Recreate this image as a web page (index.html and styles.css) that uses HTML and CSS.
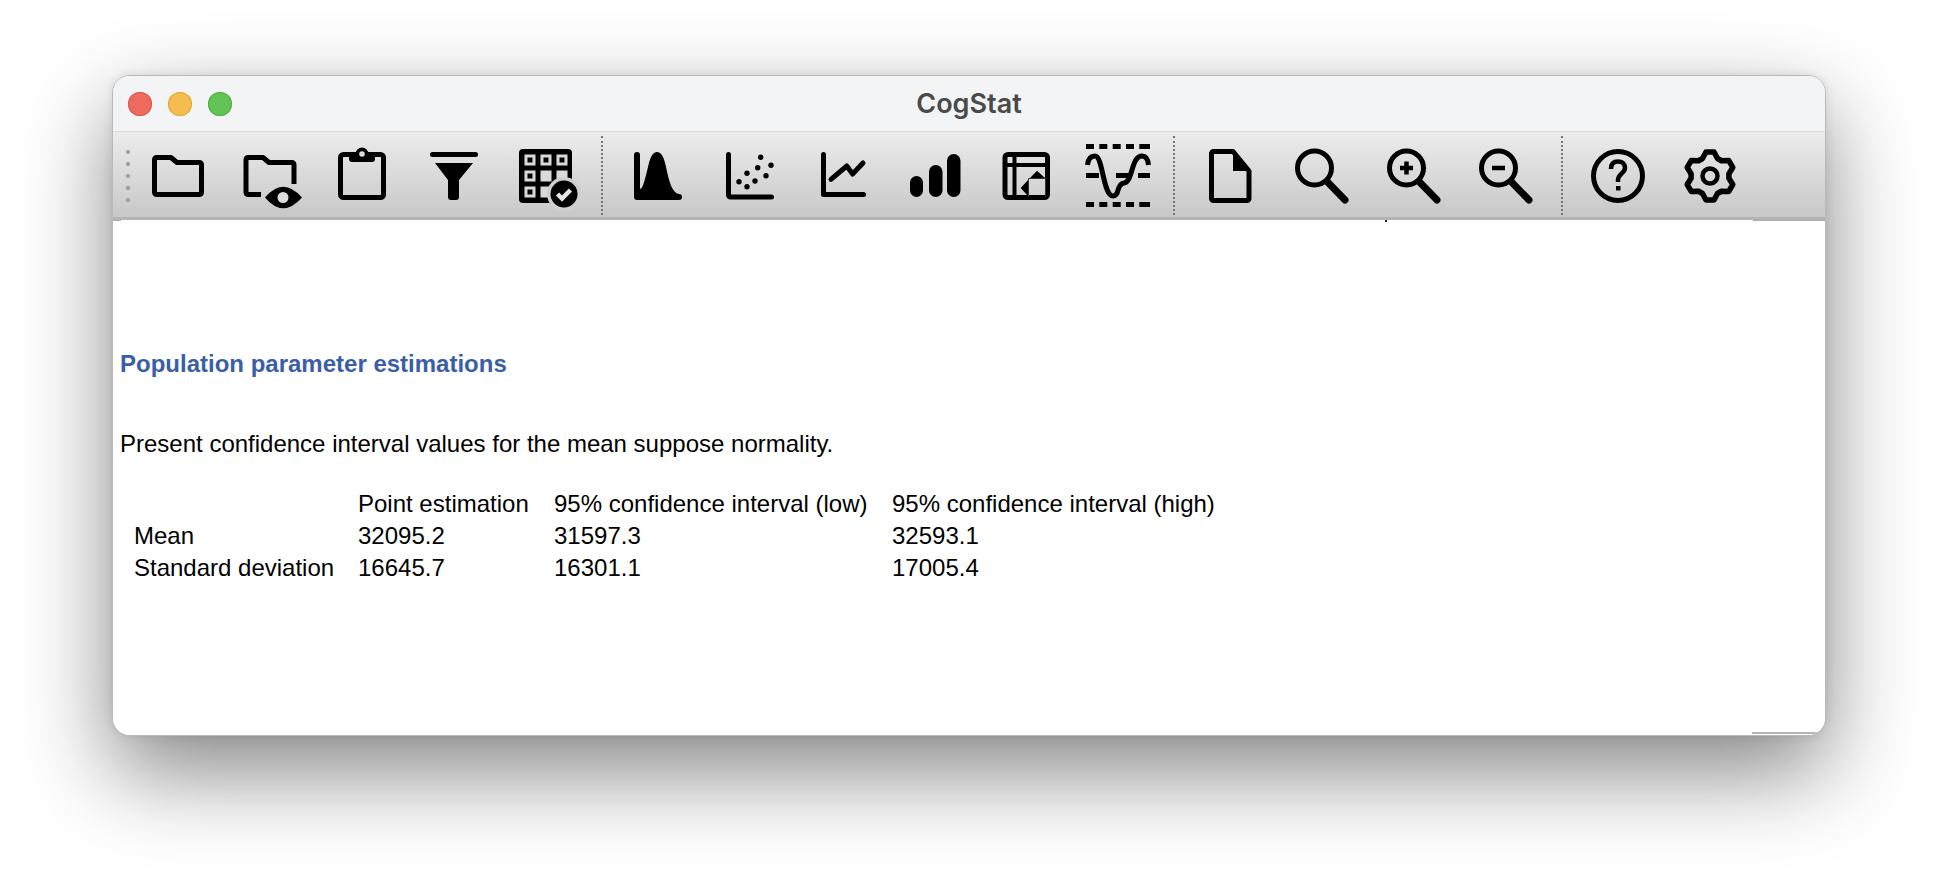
FILE: index.html
```html
<!DOCTYPE html>
<html lang="en">
<head>
<meta charset="utf-8">
<title>CogStat</title>
<link rel="stylesheet" href="styles.css">
</head>
<body>
<div class="window">
  <header class="titlebar">
    <span class="light red"></span><span class="light yellow"></span><span class="light green"></span>
    <span class="title">CogStat</span>
  </header>
  <nav class="toolbar">
    <div class="grip"><i></i><i></i><i></i><i></i><i></i></div>
    <div class="slot"><svg class="ico" viewBox="0 0 64 64"><path class="ln" d="M10 14.500h15l6 5h22.500a2 2 0 0 1 2 2v28a2 2 0 0 1-2 2h-43a2 2 0 0 1-2-2v-33a2 2 0 0 1 2-2z"/></svg></div>
    <div class="slot"><svg class="ico" viewBox="0 0 64 64"><path class="ln" d="M23 51.500H10a2 2 0 0 1-2-2v-33a2 2 0 0 1 2-2h15l6 5h23a2 2 0 0 1 2 2V41"/><path d="M27 54.500Q45 33 64 54.500Q45 76 27 54.500Z"/><circle class="hole" cx="45" cy="54.500" r="5.500"/></svg></div>
    <div class="slot"><svg class="ico" viewBox="0 0 64 64"><rect class="ln" x="10.500" y="11.500" width="43" height="43" rx="3"/><path d="M19 11h6.500a6.500 6.500 0 0 1 13 0H45v5a3 3 0 0 1-3 3H22a3 3 0 0 1-3-3z"/><circle class="hole" cx="32" cy="11" r="2.800"/></svg></div>
    <div class="slot"><svg class="ico" viewBox="0 0 64 64"><rect x="8" y="9" width="48" height="5" rx="2.500"/><path d="M13 20H51L37 37V54a3 3 0 0 1-3 3h-5a3 3 0 0 1-3-3V37Z"/></svg></div>
    <div class="slot"><svg class="ico" viewBox="0 0 64 64"><rect x="5" y="6" width="53" height="54" rx="4"/><g class="cell"><rect x="10.500" y="11.500" width="11" height="11"/><rect x="26.500" y="11.500" width="11" height="11"/><rect x="42.500" y="11.500" width="11" height="11"/><rect x="10.500" y="27.500" width="11" height="11"/><rect x="26.500" y="27.500" width="11" height="11"/><rect x="42.500" y="27.500" width="11" height="11"/><rect x="10.500" y="43.500" width="11" height="11"/><rect x="26.500" y="43.500" width="11" height="11"/></g><rect x="13.500" y="14.500" width="5" height="5"/><rect x="29.500" y="14.500" width="5" height="5"/><rect x="45.500" y="14.500" width="5" height="5"/><rect x="13.500" y="30.500" width="5" height="5"/><rect x="13.500" y="46.500" width="5" height="5"/><circle class="hole-low" cx="50" cy="51" r="17"/><circle cx="50" cy="51" r="13.500"/><path class="tick" d="M43.500 51l4.500 4.500 8.500-8.500"/></svg></div>
    <div class="sep"></div>
    <div class="slot"><svg class="ico" viewBox="1 0 64 64"><path d="M9 12a3 3 0 0 1 6 0V46C18 46 20 36 23 24C25 14 28 9 32 9C36 9 39 14 41 24C44 38 47 50 54 51a3 3 0 0 1 0 6H12a3 3 0 0 1-3-3Z"/></svg></div>
    <div class="slot"><svg class="ico" viewBox="0 0 64 64"><path class="ln rnd" d="M10.500 11.500V52a2 2 0 0 0 2 2H53.500"/><circle cx="42.700" cy="14.300" r="2.700"/><circle cx="39.700" cy="24.700" r="2.700"/><circle cx="53" cy="22.300" r="2.700"/><circle cx="48" cy="32.700" r="2.700"/><circle cx="29" cy="30.300" r="2.700"/><circle cx="21" cy="38.700" r="2.700"/><circle cx="37" cy="38" r="2.700"/><circle cx="29" cy="43.700" r="2.700"/></svg></div>
    <div class="slot"><svg class="ico" viewBox="-1 0 64 64"><path class="ln rnd" d="M12.500 11.500V51.500H52.500"/><path class="ln rnd" d="M20 36.300L35.800 23L41.600 31L52 20"/></svg></div>
    <div class="slot"><svg class="ico" viewBox="-1 0 64 64"><rect x="7" y="33" width="13" height="21" rx="6.500"/><rect x="26" y="22" width="13.500" height="32" rx="6.700"/><rect x="44" y="11" width="13.500" height="43" rx="6.700"/></svg></div>
    <div class="slot"><svg class="ico" viewBox="0 0 64 64"><rect class="ln" x="11" y="11.500" width="42.500" height="43" rx="3"/><path class="ln thin" d="M11 22H53.500M20.500 11.500V54.500"/><path d="M43 27.700L51 35H36ZM26.700 45L34 37V53Z"/><path class="ln hair" d="M34.500 35.500H51.500V54M34.500 35.500V54"/></svg></div>
    <div class="slot"><svg class="ico" viewBox="0 0 64 64"><g><rect x="0" y="1" width="8" height="5"/><rect x="13.300" y="1" width="8" height="5"/><rect x="26.700" y="1" width="8" height="5"/><rect x="40" y="1" width="8" height="5"/><rect x="53.300" y="1" width="10.700" height="5"/><rect x="0" y="59" width="8" height="5"/><rect x="13.300" y="59" width="8" height="5"/><rect x="26.700" y="59" width="8" height="5"/><rect x="40" y="59" width="8" height="5"/><rect x="53.300" y="59" width="10.700" height="5"/><rect x="0" y="30" width="13" height="5"/><rect x="30" y="30" width="14" height="5"/><rect x="52" y="30" width="12" height="5"/></g><path class="ln" d="M1.500 22C2 16 5 13 9 13C17 13 17 53 27 53C34 53 30 41 38 40C47 39 45 13 56 13C60 13 62 16 62.500 22"/></svg></div>
    <div class="sep"></div>
    <div class="slot"><svg class="ico" viewBox="0 0 64 64"><path class="ln" d="M15 8.500H35L51 28V55.500a2 2 0 0 1-2 2H15.500a2 2 0 0 1-2-2V10a2 2 0 0 1 1.500-1.500Z"/><path d="M35 8L52 28H35Z"/></svg></div>
    <div class="slot"><svg class="ico" viewBox="0 0 64 64"><circle class="ln" cx="24.500" cy="25" r="17"/><path class="ln hdl" d="M38 39.500L55 57"/></svg></div>
    <div class="slot"><svg class="ico" viewBox="0 0 64 64"><circle class="ln" cx="24.500" cy="25" r="17"/><path class="ln hdl" d="M38 39.500L55 57"/><path class="ln sym" d="M18 25H31M24.500 18.500V31.500"/></svg></div>
    <div class="slot"><svg class="ico" viewBox="0 0 64 64"><circle class="ln" cx="24.500" cy="25" r="17"/><path class="ln hdl" d="M38 39.500L55 57"/><path class="ln sym" d="M18 25H31"/></svg></div>
    <div class="sep"></div>
    <div class="slot"><svg class="ico" viewBox="0 0 64 64"><circle class="ln" cx="32" cy="33" r="24.500"/><path class="ln sym" d="M25 26C25 20.500 28 18.500 32 18.500C37 18.500 39 22 39 25C39 30 32 31 32 37V39"/><rect x="30" y="43" width="4.500" height="4.500"/></svg></div>
    <div class="slot"><svg class="ico" viewBox="0 0 64 64"><path class="ln gear" d="M24.500 15.500L28 9H36L39.500 15.500L43.410 17.750L50.780 17.540L54.780 24.460L50.910 30.750V35.250L54.780 41.540L50.780 48.460L43.410 48.250L39.500 50.500L36 57H28L24.500 50.500L20.590 48.250L13.220 48.460L9.220 41.540L13.090 35.250V30.750L9.220 24.460L13.220 17.540L20.590 17.750Z"/><circle class="ln gc" cx="32" cy="33" r="7.500"/></svg></div>
  </nav>
  <main class="content">
    <h2 class="heading">Population parameter estimations</h2>
    <p class="note">Present confidence interval values for the mean suppose normality.</p>
    <table class="results">
      <tr><th class="c1"></th><th class="c2">Point estimation</th><th class="c3">95% confidence interval (low)</th><th>95% confidence interval (high)</th></tr>
      <tr><td>Mean</td><td>32095.2</td><td>31597.3</td><td>32593.1</td></tr>
      <tr><td>Standard deviation</td><td>16645.7</td><td>16301.1</td><td>17005.4</td></tr>
    </table>
    <span class="mark-tick"></span><span class="mark-tr"></span><span class="mark-tl"></span><span class="mark-br"></span>
  </main>
</div>
</body>
</html>
```
FILE: styles.css
```css
* { box-sizing: border-box; }
html, body { margin: 0; padding: 0; height: 100%; overflow: hidden; background: #fff; }
body { padding: 75px 0 0 112px; font-family: "Liberation Sans", Arial, sans-serif; }

.window {
  width: 1714px;
  height: 661px;
  border: 1px solid #b9b9b9;
  border-radius: 18px;
  overflow: hidden;
  background: #fff;
  display: flex;
  flex-direction: column;
  box-shadow: 0 36px 90px rgba(0, 0, 0, .48), 0 0 10px rgba(0, 0, 0, .1);
}

.titlebar {
  height: 56px;
  flex: none;
  background: #f3f4f6;
  border-bottom: 1px solid #d9d9d9;
  display: flex;
  align-items: center;
  padding-left: 15px;
  gap: 16px;
  position: relative;
}
.light { width: 24px; height: 24px; border-radius: 50%; }
.red { background: #ee6a5f; box-shadow: inset 0 0 0 1px #d9574d; }
.yellow { background: #f5bd4f; box-shadow: inset 0 0 0 1px #dfa63f; }
.green { background: #61c454; box-shadow: inset 0 0 0 1px #52ad46; }
.title {
  position: absolute;
  left: 0; right: 0;
  text-align: center;
  font: 600 27px "Inter", sans-serif;
  color: #4a4a4a;
}

.toolbar {
  height: 88px;
  flex: none;
  display: flex;
  align-items: flex-start;
  padding: 4px 0 0 13px;
  background: linear-gradient(#ececec, #c8c8c8);
  border-bottom: 3px solid #b4b4b4;
}
.grip { width: 4px; margin: 14px 2px 0 0; display: flex; flex-direction: column; gap: 8px; }
.grip i { width: 4px; height: 4px; border-radius: 50%; background: #999; }
.slot { width: 92px; display: flex; justify-content: center; padding-top: 7px; }
.sep { width: 2px; height: 79px; margin: 0 9px; border-left: 2px dotted #777; }

.ico { width: 64px; height: 64px; overflow: visible; fill: #000; display: block; }
.ln { fill: none; stroke: #000; stroke-width: 5; stroke-linejoin: round; }
.rnd { stroke-linecap: round; }
.thin { stroke-width: 4; }
.hair { stroke-width: 1; stroke: #333; }
.hdl { stroke-width: 7; stroke-linecap: round; }
.sym { stroke-width: 4.500; }
.gc { stroke-width: 4.500; }
.gear { stroke-width: 5.500; }
.hole { fill: #dcdcdc; }
.hole-low { fill: #cfcfcf; }
.cell { fill: #d9d9d9; }
.tick { fill: none; stroke: #e6e6e6; stroke-width: 4.500; }

.content { flex: 1; position: relative; padding: 131px 0 0 7px; background: #fff; color: #000; }
.heading { margin: 0; font-size: 24px; line-height: 26px; font-weight: 700; color: #3a5ea8; }
.note { margin: 54px 0 0; font-size: 24px; line-height: 26px; }
.results { margin: 31px 0 0 4px; border-collapse: collapse; font-size: 24px; }
.results th, .results td { padding: 0 0 0 10px; height: 32px; font-weight: 400; text-align: left; white-space: nowrap; }
.c1 { width: 224px; }
.c2 { width: 196px; }
.c3 { width: 338px; }

.mark-tick, .mark-tr, .mark-tl, .mark-br { position: absolute; }
.mark-tick { left: 1272px; top: 0; width: 2px; height: 2px; background: #222; }
.mark-tr { right: 0; top: 0; width: 72px; height: 1px; background: #aaa; }
.mark-tl { left: 0; top: 0; width: 8px; height: 1px; background: #aaa; }
.mark-br { right: 5px; bottom: 1px; width: 68px; height: 2px; background: #b5b5b5; }
```
